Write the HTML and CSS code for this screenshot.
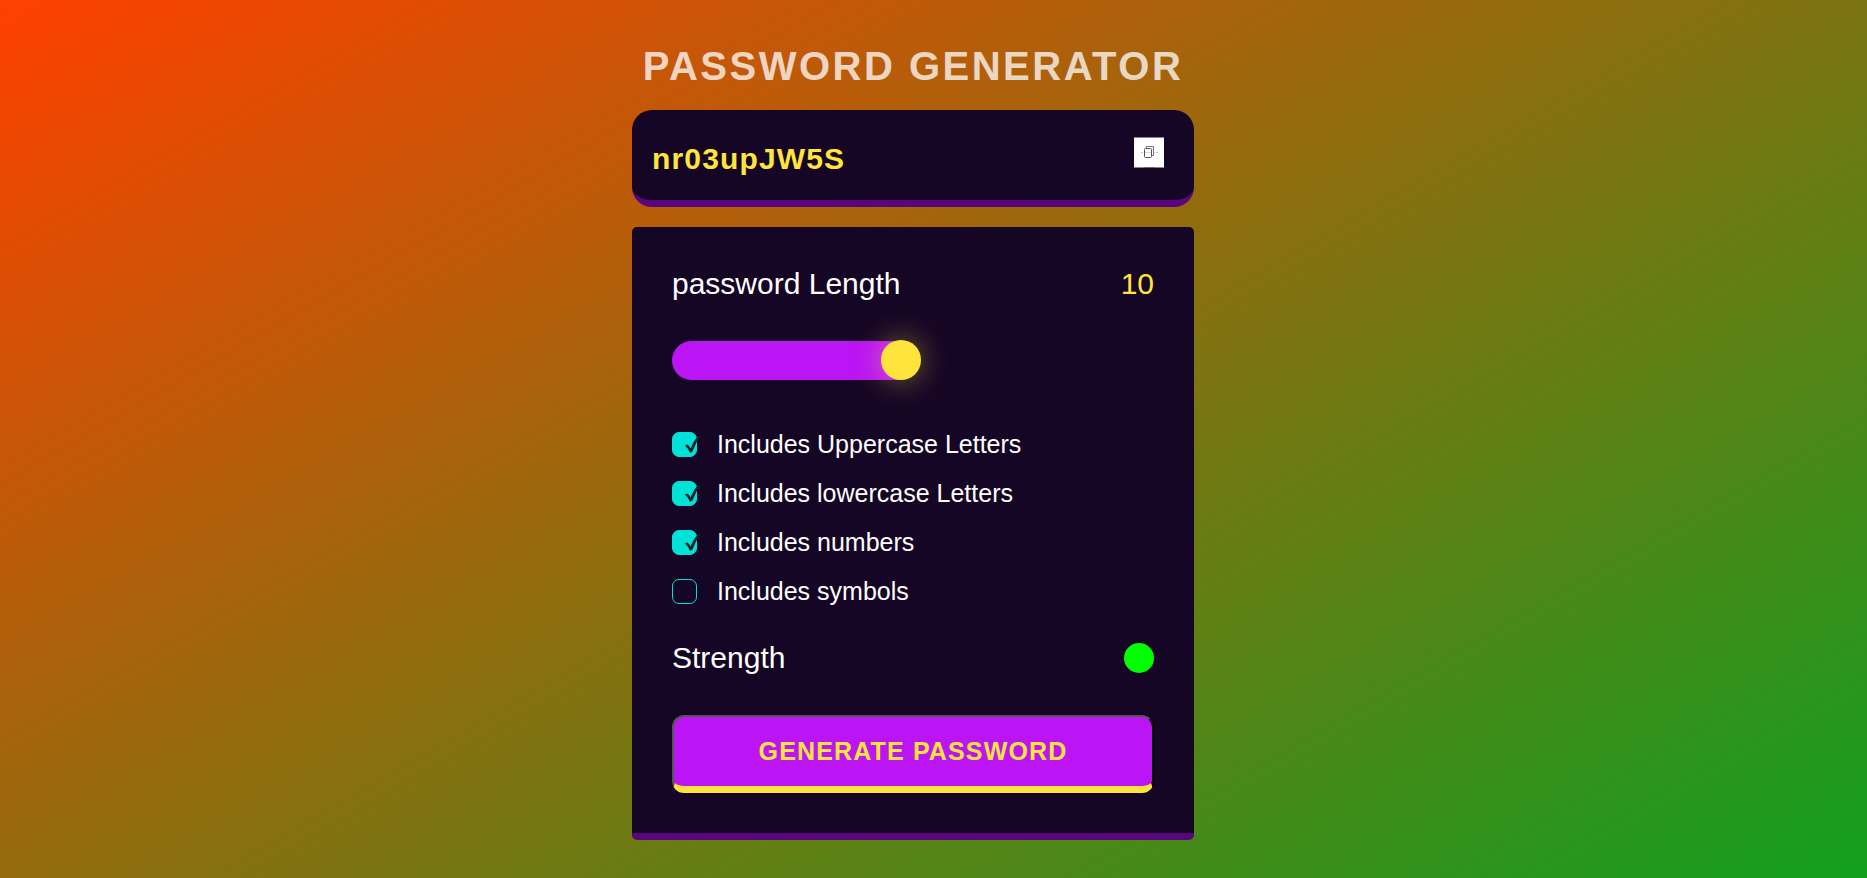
FILE: index.html
```html
<!DOCTYPE html>
<html lang="en">
<head>
<meta charset="utf-8">
<title>Password Generator</title>
<link rel="stylesheet" href="styles.css">
</head>
<body>
<main class="container">
  <h1 class="title">PASSWORD GENERATOR</h1>
  <div class="display">
    <span class="password">nr03upJW5S</span>
    <button class="copy" type="button" aria-label="Copy">
      <svg width="30" height="31" viewBox="0 0 30 31">
        <rect width="30" height="31" fill="#fff"/>
        <path d="M0 .5H30M0 30.5H30" stroke="#8b8391"/>
        <path d="M7 15.5H24" stroke="#c9c9c9" stroke-dasharray="2 1"/>
        <path d="M12.500 11V9.500H19.500V18.500H17.500" fill="none" stroke="#777"/>
        <rect x="10.500" y="11.500" width="7" height="9" rx="1" fill="#fff" stroke="#555"/>
        <path d="M11 15.500H17" stroke="#ddd"/>
        <path d="M10 30.500H21" stroke="#6d6672"/>
      </svg>
    </button>
  </div>
  <section class="panel">
    <div class="row">
      <span>password Length</span>
      <span class="length">10</span>
    </div>
    <div class="slider"><span class="thumb"></span></div>
    <div class="options">
      <label class="option"><span class="box checked"><svg class="tick" viewBox="0 0 16 18"><path d="M0 9.500L2.500 8.500Q4.500 10 5.500 12.500Q9 4.500 12.500 .5L15.500 .3Q10.500 7 7.500 15.500L5 17Q3.500 12.500 0 9.500Z"/></svg></span>Includes Uppercase Letters</label>
      <label class="option"><span class="box checked"><svg class="tick" viewBox="0 0 16 18"><path d="M0 9.500L2.500 8.500Q4.500 10 5.500 12.500Q9 4.500 12.500 .5L15.500 .3Q10.500 7 7.500 15.500L5 17Q3.500 12.500 0 9.500Z"/></svg></span>Includes lowercase Letters</label>
      <label class="option"><span class="box checked"><svg class="tick" viewBox="0 0 16 18"><path d="M0 9.500L2.500 8.500Q4.500 10 5.500 12.500Q9 4.500 12.500 .5L15.500 .3Q10.500 7 7.500 15.500L5 17Q3.500 12.500 0 9.500Z"/></svg></span>Includes numbers</label>
      <label class="option"><span class="box"></span>Includes symbols</label>
    </div>
    <div class="row strength">
      <span>Strength</span>
      <span class="indicator"></span>
    </div>
    <button class="generate" type="button">GENERATE PASSWORD</button>
  </section>
</main>
</body>
</html>
```
FILE: styles.css
```css
* { box-sizing: border-box; margin: 0; padding: 0; }
body {
  height: 878px;
  overflow: hidden;
  font-family: "Liberation Sans", Arial, sans-serif;
  color: #fff;
  background: linear-gradient(150deg, #ff4000, #119f1f);
}
.container {
  width: 562px;
  margin-left: 632px;
  padding-top: 43px;
}
.title {
  height: 67px;
  font-size: 40px;
  line-height: 46px;
  letter-spacing: 2.5px;
  text-align: center;
  white-space: nowrap;
  opacity: .75;
}
.display {
  display: flex;
  justify-content: space-between;
  height: 97px;
  padding: 27px 30px 0 20px;
  background: #160625;
  border-bottom: 7px solid #59057b;
  border-radius: 20px;
}
.password {
  padding-top: 5px;
  font-size: 30px;
  line-height: 34px;
  font-weight: bold;
  letter-spacing: 1.15px;
  color: #ffe53b;
}
.copy { width: 30px; height: 31px; border: 0; background: none; }
.copy svg { display: block; }
.panel {
  height: 613px;
  margin-top: 20px;
  padding: 40px;
  background: #160625;
  border-bottom: 7px solid #59057b;
  border-radius: 5px;
}
.row {
  display: flex;
  justify-content: space-between;
  align-items: center;
  height: 34px;
  font-size: 30px;
}
.length { color: #ffe53b; }
.slider {
  display: flex;
  justify-content: flex-end;
  width: 249px;
  height: 39px;
  margin-top: 40px;
  background: linear-gradient(to right, #bb14f5 229px, transparent 229px);
  border-radius: 20px;
}
.thumb {
  width: 40px;
  height: 40px;
  margin-top: -1px;
  border-radius: 50%;
  background: #ffe53b;
  box-shadow: 0 0 30px rgba(255, 229, 59, .45);
}
.options {
  display: flex;
  flex-direction: column;
  gap: 20px;
  margin-top: 50px;
}
.option {
  display: flex;
  align-items: center;
  gap: 20px;
  height: 29px;
  font-size: 25px;
}
.box {
  position: relative;
  width: 25px;
  height: 25px;
  border: 1px solid #00e2d6;
  border-radius: 7px;
}
.checked { background: #00e2d6; }
.tick {
  position: absolute;
  left: 12px;
  top: 3px;
  width: 16px;
  height: 18px;
  fill: #1b2329;
}
.strength { margin-top: 35px; }
.indicator { width: 30px; height: 30px; border-radius: 50%; background: #0f0; }
.generate {
  display: block;
  width: 482px;
  height: 78px;
  margin-top: 40px;
  font: bold 25px "Liberation Sans", Arial, sans-serif;
  letter-spacing: 1.15px;
  color: #ffe53b;
  background: #bb14f5;
  border: 2px outset #000;
  border-bottom: 7px solid #ffe53b;
  border-radius: 12px;
}
```
